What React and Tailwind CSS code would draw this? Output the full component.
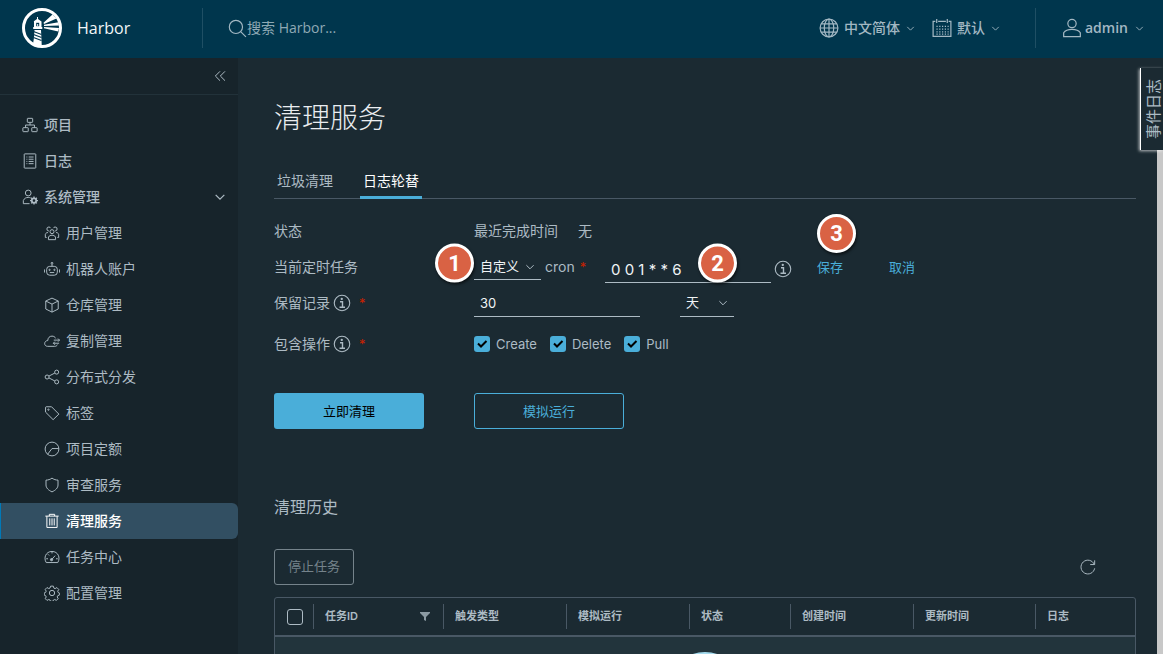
const topItems = [
  { label: "项目", icon: "organization" },
  { label: "日志", icon: "list" },
];

const adminItems = [
  { label: "用户管理", icon: "users" },
  { label: "机器人账户", icon: "robot" },
  { label: "仓库管理", icon: "block" },
  { label: "复制管理", icon: "cloud" },
  { label: "分布式分发", icon: "share" },
  { label: "标签", icon: "tag" },
  { label: "项目定额", icon: "quota" },
  { label: "审查服务", icon: "shield" },
  { label: "清理服务", icon: "trash", active: true },
  { label: "任务中心", icon: "dashboard" },
  { label: "配置管理", icon: "cog" },
];

const columns = [
  { label: "任务ID", width: 130, filter: true },
  { label: "触发类型", width: 123 },
  { label: "模拟运行", width: 123 },
  { label: "状态", width: 101 },
  { label: "创建时间", width: 123 },
  { label: "更新时间", width: 122 },
  { label: "日志", width: 100 },
];

const operations = ["Create", "Delete", "Pull"];

// All shapes are drawn on a 36x36 grid
const shapes = {
  organization: (
    <>
      <rect x="12" y="3" width="12" height="9" rx="1" />
      <rect x="2" y="24" width="12" height="9" rx="1" />
      <rect x="22" y="24" width="12" height="9" rx="1" />
      <path d="M18 12v6M8 24v-6h20v6" />
    </>
  ),
  list: (
    <>
      <rect x="5" y="2" width="26" height="32" rx="1" />
      <path d="M10 9h2M10 14h2M10 19h2M10 24h2M15 9h11M15 14h11M15 19h11M15 24h11" />
    </>
  ),
  admin: (
    <>
      <circle cx="14" cy="9" r="6.5" />
      <path d="M17 33H3v-7c2-5 6-7 11-7 2 0 4 .3 5.500 1" />
      <circle cx="27" cy="26" r="5" strokeWidth="4" />
      <path d="M27 17v3M27 32v3M18 26h3M33 26h3M20.600 19.600l2.200 2.200M31.200 30.200l2.200 2.200M33.400 19.600l-2.200 2.200M22.800 30.200l-2.200 2.200" strokeWidth="3" />
    </>
  ),
  users: (
    <>
      <circle cx="18" cy="15" r="4.500" />
      <path d="M10 33v-6c2-3 5-4 8-4s6 1 8 4v6z" />
      <path d="M11 4.500a4.500 4.500 0 1 0 0 9M25 4.500a4.500 4.500 0 1 1 0 9M11 4.500c2 0 3 1 4 2.500M25 4.500c-2 0-3 1-4 2.500M9 17c-3 0-5 1-6 4v7h3M27 17c3 0 5 1 6 4v7h-3" />
    </>
  ),
  robot: (
    <>
      <rect x="6" y="12" width="24" height="20" rx="7" />
      <path d="M18 12V7M1 19v7M35 19v7M13 26h10" />
      <circle cx="18" cy="5" r="2" />
      <circle cx="12.500" cy="20" r="1.500" />
      <circle cx="23.500" cy="20" r="1.500" />
    </>
  ),
  block: <path d="M18 2.500l14 6.500v18l-14 7-14-7V9zM4 9l14 7 14-7M18 16v18" />,
  cloud: (
    <>
      <path d="M30 26c-1 3-3 4-6 4H8c-4 0-6.500-3-6.500-6 0-4 3-7 7-7 0-6 4-10 9.500-10 4 0 7 2 8 5" />
      <path d="M22 16h13M31.500 12.500L35 16l-3.500 3.500M34 23H21M24.500 19.500L21 23l3.500 3.500" />
    </>
  ),
  share: (
    <>
      <circle cx="7" cy="18" r="4.500" />
      <circle cx="28.500" cy="7" r="4.500" />
      <circle cx="28.500" cy="29" r="4.500" />
      <path d="M11 16l13.500-7M11 20l13.500 7" />
    </>
  ),
  tag: (
    <>
      <path d="M3.500 5v11l17 17 13-12.500L17 4H5z" />
      <circle cx="10" cy="10.500" r="1.500" />
    </>
  ),
  quota: (
    <>
      <circle cx="18" cy="18" r="15.500" />
      <path d="M33 17H18L8 30" />
    </>
  ),
  shield: <path d="M18 2.500c4 3 9 4.500 13.500 4.500v11c0 7-6 12-13.500 15.500C10.500 30 4.500 25 4.500 18V7C9 7 14 5.500 18 2.500z" />,
  trash: <path d="M3 7h30M12 7V3h12v4M6.500 7v25.500h23V7M13 12v16M18 12v16M23 12v16" />,
  dashboard: (
    <>
      <path d="M5 30.500C-1.500 20 4 5.500 18 5.500S37.500 20 31 30.500z" />
      <path d="M18 6v4M5 22h4M27 22h4M9 12l2.500 2.500" />
      <path d="M17 24l8-9" />
      <circle cx="17" cy="24" r="2.500" fill="currentColor" />
    </>
  ),
  cog: (
    <>
      <circle cx="18" cy="18" r="6" />
      <path d="M15 2.500h6l1.200 4.500 2.800 1.200 4-2.400 4.200 4.200-2.400 4 1.200 2.800 2.500 1v5l-3.500 1.200-1.200 2.800 2 4-3.800 3.800-4-2-2.800 1.200-1.200 3h-5l-1.500-3-2.800-1.200-4 2-3.800-3.800 2-4-1.200-2.800-3.200-1.200v-5l3.200-1.200 1.200-2.800-2.200-4 4-4 4 2.200 2.800-1.200z" />
    </>
  ),
  search: (
    <>
      <circle cx="15" cy="15" r="12.500" />
      <path d="M24 24l10 10" />
    </>
  ),
  globe: (
    <>
      <circle cx="18" cy="18" r="16" />
      <ellipse cx="18" cy="18" rx="8.500" ry="16" />
      <path d="M18 2v32M2 18h32M4.500 10.500h27M4.500 25.500h27" />
    </>
  ),
  calendar: (
    <>
      <path d="M6 6H2v27h32V6h-4M11 6h14M8.500 2v7M27.500 2v7" />
      <path d="M8 15h22M8 20h22M8 25h22M8 29h22" strokeDasharray="2.200 2.800" />
    </>
  ),
  user: (
    <>
      <circle cx="18" cy="10" r="7.500" />
      <path d="M3 33.500v-7C6 22 11 20.500 18 20.500S30 22 33 26.500v7z" />
    </>
  ),
  info: (
    <>
      <circle cx="18" cy="18" r="15.500" />
      <path d="M14 15.500h5V26M13 26.500h11" strokeWidth="2.800" />
      <circle cx="17.500" cy="9.800" r="1.200" fill="currentColor" />
    </>
  ),
  angle: <path d="M5 11.500l13 13 13-13" strokeWidth="3.600" />,
  collapse: <path d="M18 4L4 18l14 14M33 4L19 18l14 14" strokeWidth="3" />,
  refresh: <path d="M32 12A15.500 15.500 0 1 0 33 21M33 3v9.500h-10" />,
};

function Icon({ name, className = "size-4" }) {
  return (
    <svg
      viewBox="0 0 36 36"
      fill="none"
      stroke="currentColor"
      strokeWidth="2.200"
      className={`shrink-0 ${className}`}
      aria-hidden="true"
    >
      {shapes[name]}
    </svg>
  );
}

function Logo() {
  return (
    <svg viewBox="0 0 40 40" className="size-10 shrink-0" aria-hidden="true">
      <circle cx="20" cy="20" r="18.500" fill="#00364d" stroke="#fff" strokeWidth="3" />
      <g fill="#fff">
        <path d="M11.500 13.500L15 11V9h1v2l3.500 2.500v5.500h.8v2H11.200v-2h.8v-5.500z" />
        <path d="M12.500 22h6.500l.8 16.500L11 36l.8-5z" />
        <path d="M21.500 14.800L30.500 6.500l4 4-12.500 5.500zM22 16.800l14.500-2.500.5 3.200-15 .5zM22 19l15 1-.8 3.400-14.200-3.200z" />
      </g>
      <path d="M14.200 18.200v-3.400h3v3.400z" fill="#00364d" />
      <path d="M15.700 16v2.200" stroke="#fff" />
      <path d="M11.500 23.500l8 3M11.500 26.500l8 3M11.500 29.500l8 3" stroke="#00364d" strokeWidth="1.200" />
    </svg>
  );
}

function Header() {
  return (
    <header className="flex h-[58px] shrink-0 items-center bg-[#00364d] pr-[19px] pb-[2px] pl-[22px] text-[#a3b8c3]">
      <a href="#home" className="flex w-[180px] items-center gap-[15px] text-base text-[#f2f6f8]">
        <Logo />
        Harbor
      </a>
      <label className="flex h-10 flex-1 items-center border-l border-[#1f4f64] pl-[25px]">
        <Icon name="search" className="size-[19px]" />
        <input
          type="text"
          aria-label="搜索"
          placeholder="搜索 Harbor..."
          className="w-40 bg-transparent text-sm outline-none placeholder:text-[#8fa9b5]"
        />
      </label>
      <div className="flex items-center gap-[17px] text-sm font-medium">
        <button className="flex items-center gap-[5px]">
          <Icon name="globe" className="size-5" />
          中文简体
          <Icon name="angle" className="ml-px size-[9px]" />
        </button>
        <button className="flex items-center gap-[5px]">
          <Icon name="calendar" className="size-5" />
          默认
          <Icon name="angle" className="ml-px size-[9px]" />
        </button>
      </div>
      <div className="ml-[35px] flex h-10 items-center border-l border-[#1f4f64] pl-[26px]">
        <button className="flex items-center gap-[3px] text-sm font-semibold">
          <Icon name="user" className="size-5" />
          admin
          <Icon name="angle" className="ml-1 size-[9px]" />
        </button>
      </div>
    </header>
  );
}

function Sidebar() {
  return (
    <nav className="w-[238px] shrink-0 bg-[#17242b] text-sm text-[#adbbc4]">
      <div className="flex h-[37px] items-center justify-end border-b border-[#22323a] pr-3">
        <button aria-label="collapse">
          <Icon name="collapse" className="size-3" />
        </button>
      </div>
      <div className="mt-3">
        {topItems.map((item) => (
          <a key={item.label} href="#nav" className="flex h-9 items-center gap-[6px] pl-[22px] font-medium">
            <Icon name={item.icon} />
            {item.label}
          </a>
        ))}
        <button className="flex h-9 w-full items-center gap-[6px] pr-3 pl-[22px] font-medium">
          <Icon name="admin" />
          系统管理
          <Icon name="angle" className="ml-auto size-3" />
        </button>
        {adminItems.map((item) => (
          <a
            key={item.label}
            href="#nav"
            className={`flex h-9 items-center gap-[6px] border-l pl-[43px] ${
              item.active
                ? "rounded-r-md border-[#0079b8] bg-[#324f62] font-medium text-white"
                : "border-transparent"
            }`}
          >
            <Icon name={item.icon} />
            {item.label}
          </a>
        ))}
      </div>
    </nav>
  );
}

function Badge({ children, className }) {
  return (
    <span
      className={`absolute flex size-[39px] items-center justify-center rounded-full border-[3px] border-white bg-[#d96244] font-[Roboto] text-[22px] font-bold text-white shadow-[1px_2px_3px_rgba(0,0,0,0.6)] ${className}`}
    >
      {children}
    </span>
  );
}

function Select({ label, options, className }) {
  return (
    <span className={`relative flex ${className}`}>
      <select
        aria-label={label}
        className="w-full appearance-none border-b border-[#adbbc4] bg-transparent pl-[6px] text-[13px] text-[#f0f4f6] outline-none"
      >
        {options.map((option) => (
          <option key={option}>{option}</option>
        ))}
      </select>
      <Icon name="angle" className="pointer-events-none absolute top-1/2 right-[6px] size-[10px] -translate-y-1/2" />
    </span>
  );
}

function Required() {
  return <span className="text-[13px] text-[#c92100]">*</span>;
}

function ScheduleForm() {
  return (
    <form className="mt-[14px] text-sm">
      <div className="flex h-9 items-center">
        <span className="w-[200px]">状态</span>
        <span>最近完成时间</span>
        <span className="ml-5">无</span>
      </div>
      <div className="flex h-9 items-center">
        <span className="w-[200px]">当前定时任务</span>
        <div className="relative flex items-center">
          <Select label="当前定时任务" options={["自定义", "每天", "每周"]} className="h-[26px] w-[67px]" />
          <Badge className="top-1/2 right-full -translate-y-[60%]">1</Badge>
        </div>
        <label htmlFor="cron" className="ml-1 flex w-[60px] items-center gap-[5px]">
          cron <Required />
        </label>
        <div className="relative">
          <input
            id="cron"
            type="text"
            defaultValue="0 0 1 * * 6"
            className="h-8 w-[166px] border-b border-[#adbbc4] bg-transparent pt-[6px] pl-[6px] text-[15px] text-[#f0f4f6] outline-none"
          />
          <Badge className="top-1/2 right-[34px] -translate-y-[60%]">2</Badge>
        </div>
        <Icon name="info" className="mt-1 ml-[3px] size-[18px]" />
        <div className="relative ml-[25px] flex text-[13px] text-[#4aaed9]">
          <button type="button">保存</button>
          <Badge className="bottom-full left-0 mb-[5px]">3</Badge>
        </div>
        <button type="button" className="ml-[46px] text-[13px] text-[#4aaed9]">
          取消
        </button>
      </div>
      <div className="flex h-9 items-center">
        <label htmlFor="retention" className="flex w-[200px] items-center">
          保留记录
          <Icon name="info" className="mr-2 ml-[3px] size-[18px]" />
          <Required />
        </label>
        <input
          id="retention"
          type="text"
          defaultValue="30"
          className="h-7 w-[166px] border-b border-[#adbbc4] bg-transparent pl-[6px] text-[13px] text-[#f0f4f6] outline-none"
        />
        <Select label="单位" options={["天", "小时"]} className="ml-10 h-7 w-[54px]" />
      </div>
      <div className="mt-[5px] flex h-9 items-center">
        <span className="flex w-[200px] items-center">
          包含操作
          <Icon name="info" className="mr-2 ml-[3px] size-[18px]" />
          <Required />
        </span>
        <div className="flex gap-[13px] text-[13px]">
          {operations.map((operation) => (
            <label key={operation} className="relative flex items-center gap-[6px]">
              <input type="checkbox" defaultChecked className="size-4 appearance-none rounded-[3px] bg-[#4aaed9]" />
              <svg
                viewBox="0 0 16 16"
                className="pointer-events-none absolute left-0 size-4"
                fill="none"
                stroke="#000"
                strokeWidth="2"
              >
                <path d="M4 7.500l3 3 5.500-5.500" />
              </svg>
              {operation}
            </label>
          ))}
        </div>
      </div>
      <div className="mt-[31px] flex gap-[50px] text-[13px]">
        <button type="button" className="h-9 w-[150px] rounded-[3px] bg-[#4aaed9] text-black">
          立即清理
        </button>
        <button type="button" className="h-9 w-[150px] rounded-[3px] border border-[#4aaed9] text-[#4aaed9]">
          模拟运行
        </button>
      </div>
    </form>
  );
}

function History() {
  return (
    <section>
      <h2 className="mt-[66px] text-base leading-6">清理历史</h2>
      <div className="mt-[30px] flex items-center justify-between pr-10">
        <button className="h-9 w-20 rounded-[3px] border border-[#75838b] text-[13px] text-[#75838b]" disabled>
          停止任务
        </button>
        <button aria-label="refresh">
          <Icon name="refresh" />
        </button>
      </div>
      <div className="mt-3 overflow-hidden rounded-[3px] border border-[#495865]">
        <table className="w-full table-fixed text-left text-[11px]">
          <colgroup>
            <col width="38" />
            {columns.map((column) => (
              <col key={column.label} width={column.width} />
            ))}
          </colgroup>
          <thead>
            <tr className="h-[38px] border-b-2 border-[#495865]">
              <th className="p-0">
                <input
                  type="checkbox"
                  aria-label="全选"
                  className="ml-3 block size-4 appearance-none rounded-[3px] border border-[#adbbc4]"
                />
              </th>
              {columns.map((column) => (
                <th key={column.label} className="p-0 font-semibold">
                  <div className="flex h-[25px] items-center justify-between border-l border-[#495865] pr-[13px] pl-[11px]">
                    {column.label}
                    {column.filter && (
                      <svg viewBox="0 0 10 9" className="w-[10px] fill-[#8c9ba3]">
                        <path d="M0 0h10v1L6 5v4l-2-1V5L0 1z" />
                      </svg>
                    )}
                  </div>
                </th>
              ))}
            </tr>
          </thead>
          <tbody>
            <tr>
              <td colSpan={8} className="bg-[#22343c] px-0 pt-[15px] pb-10">
                <div className="mx-auto size-[72px] rounded-full border-[5px] border-[#a5dbee]" />
              </td>
            </tr>
          </tbody>
        </table>
      </div>
    </section>
  );
}

export default function App() {
  return (
    <div className="relative flex h-screen flex-col overflow-hidden bg-[#1b2a32] font-['Open_Sans','Noto_Sans_CJK_SC',sans-serif] text-[#adbbc4]">
      <Header />
      <div className="flex min-h-0 flex-1">
        <Sidebar />
        <main className="min-w-0 flex-1 overflow-hidden pt-[42px] pr-[21px] pl-9 font-[Inter,'Noto_Sans_CJK_SC',sans-serif]">
          <h1 className="text-[28px] leading-9 font-light text-[#eaedf0]">清理服务</h1>
          <div role="tablist" className="mt-[27px] flex gap-6 text-sm shadow-[inset_0_-1px_0_#495865]">
            <button role="tab" className="h-9 px-[3px]">
              垃圾清理
            </button>
            <button
              role="tab"
              aria-selected="true"
              className="h-9 px-[3px] text-white shadow-[inset_0_-3px_0_#4aaed9]"
            >
              日志轮替
            </button>
          </div>
          <ScheduleForm />
          <History />
        </main>
        {/* Scrollbar */}
        <div className="mt-[92px] w-[6px] shrink-0 bg-[#c8c8c8]" />
      </div>
      {/* Event log drawer handle */}
      <button className="absolute top-[68px] right-0 flex h-[82px] w-[23px] items-center justify-center border-l border-white bg-[#1b2a32] pl-[2px] text-[15px] shadow-[-1px_1px_3px_rgba(255,255,255,0.7)]">
        <span className="rotate-180 [text-orientation:sideways] [writing-mode:vertical-rl]">事件日志</span>
      </button>
    </div>
  );
}
